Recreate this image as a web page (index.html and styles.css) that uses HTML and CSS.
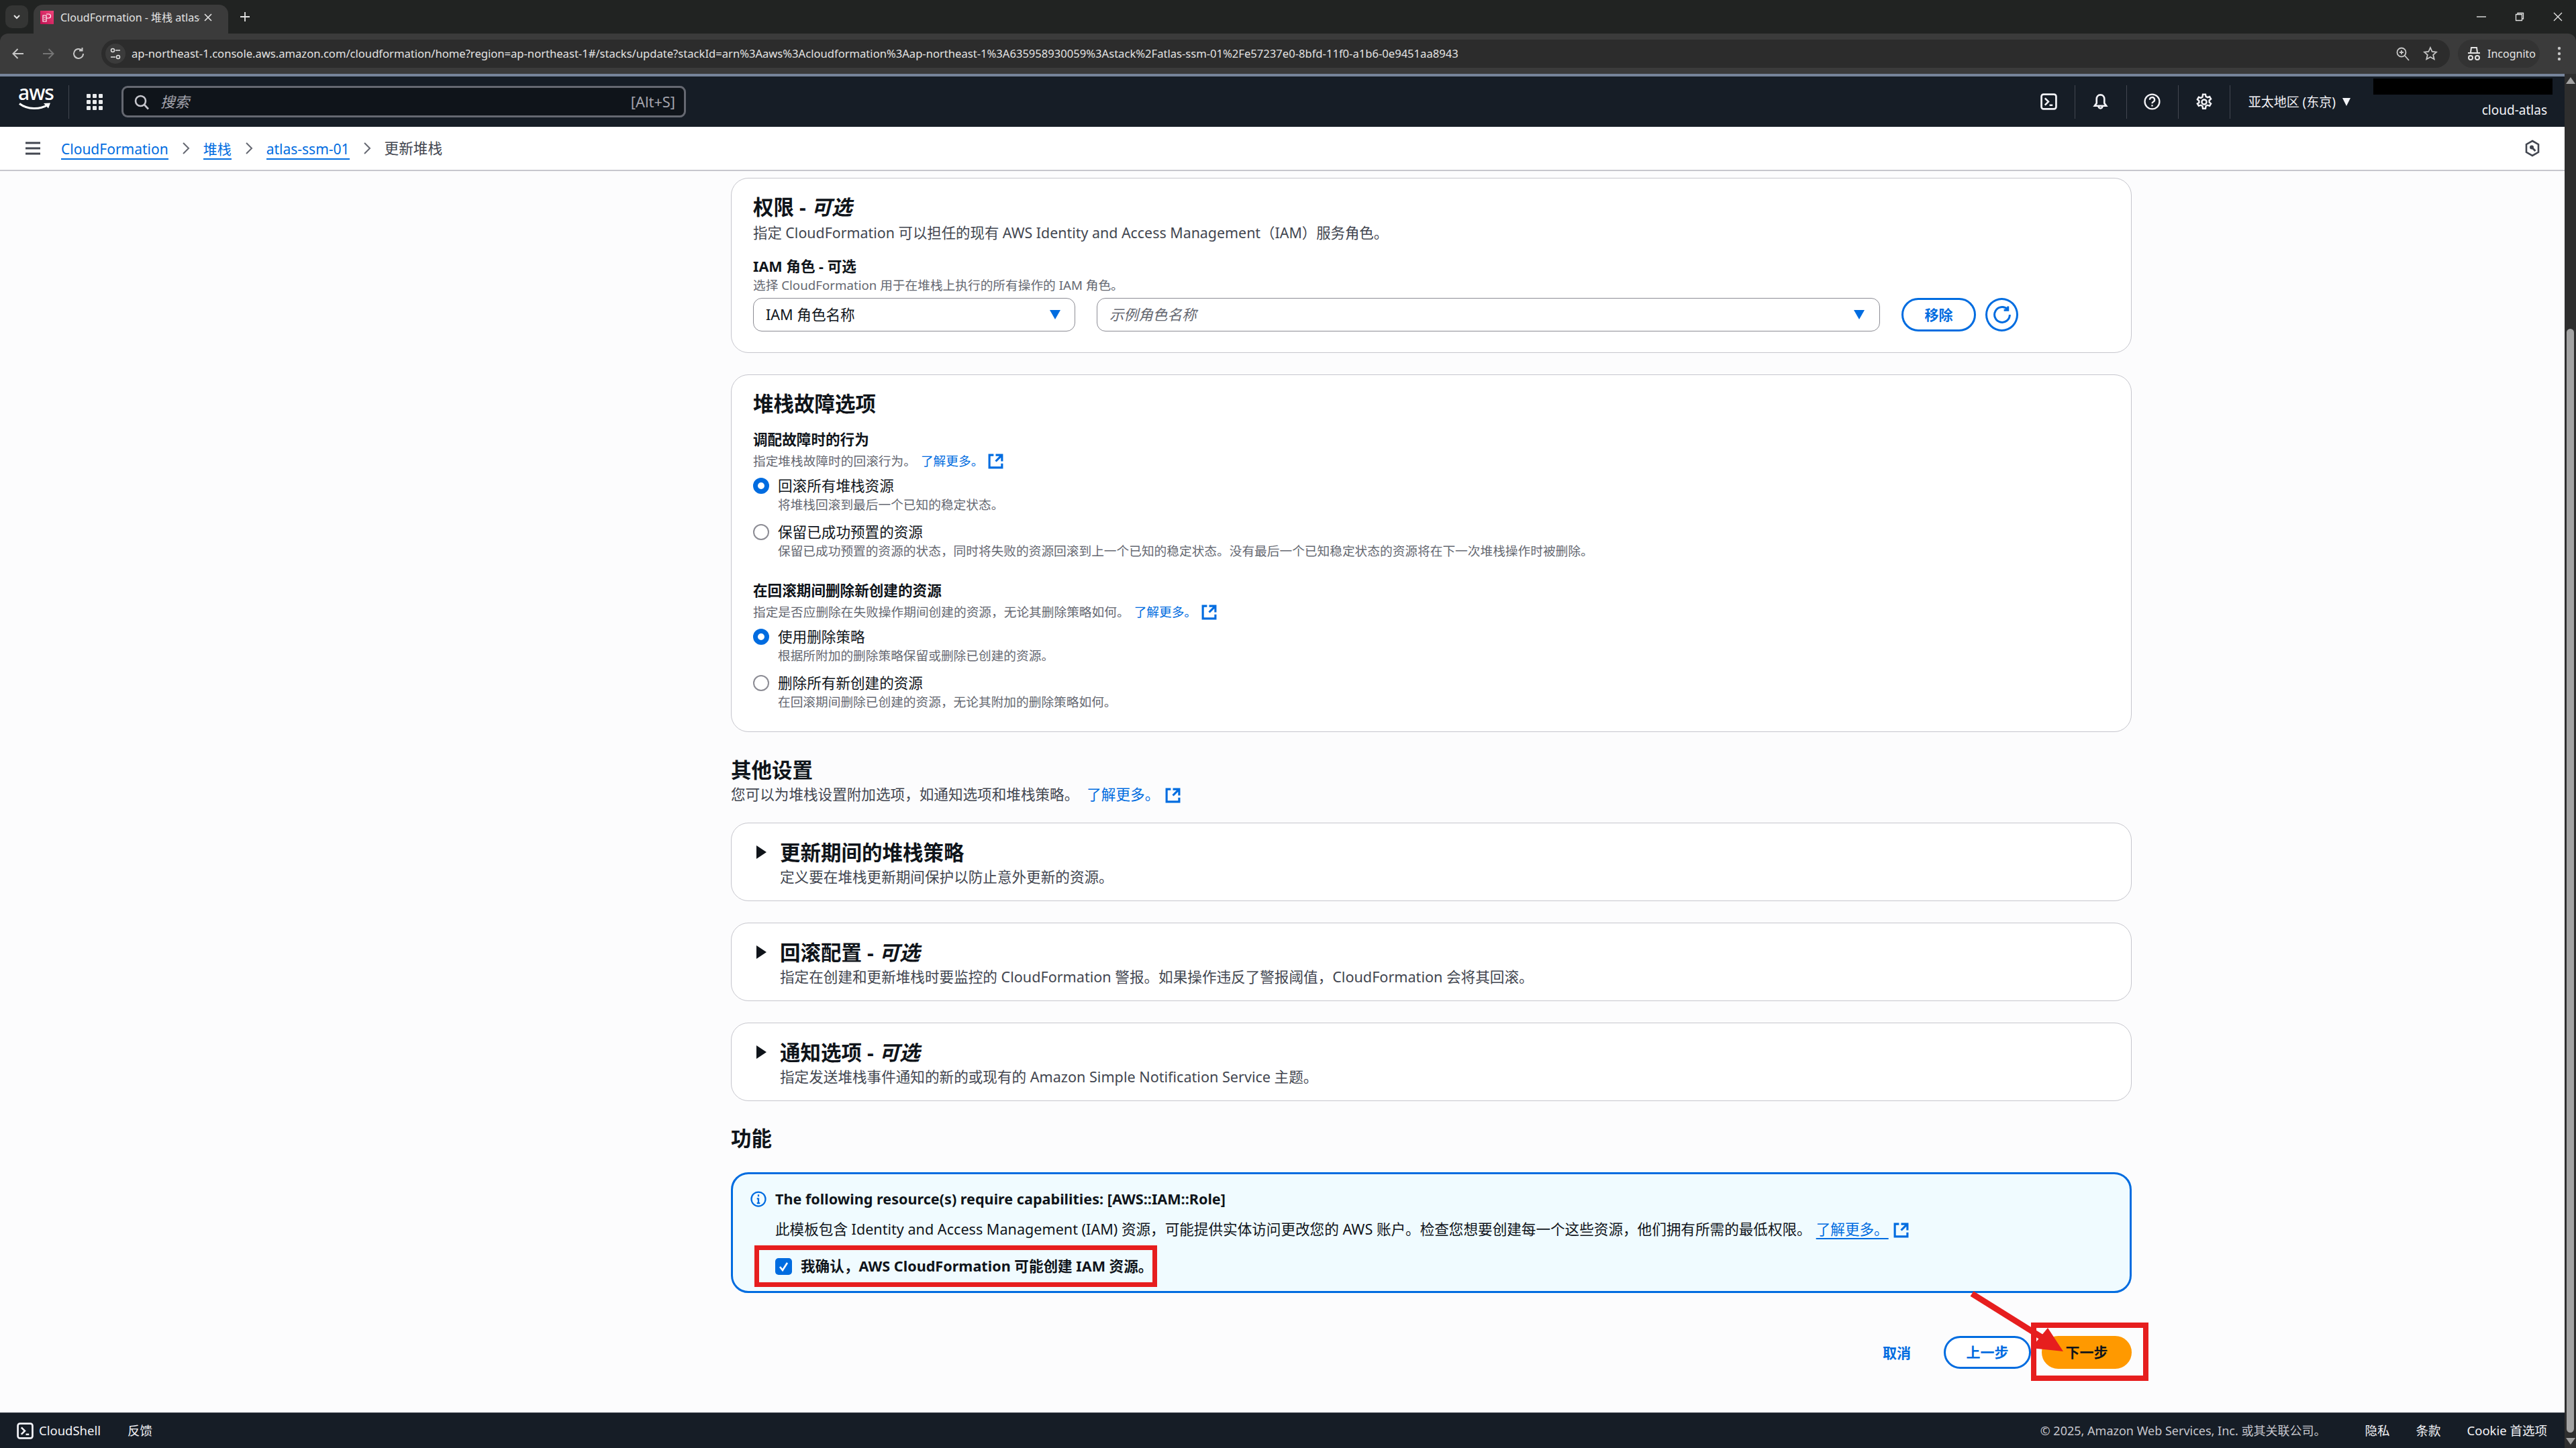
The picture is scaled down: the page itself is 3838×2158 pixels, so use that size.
FILE: index.html
```html
<!DOCTYPE html>
<html lang="zh-CN">
<head>
    <meta charset="UTF-8">
    <title>CloudFormation - 堆栈 atlas-ssm-01</title>
    <link rel="stylesheet" href="styles.css">
</head>
<body>

    <svg class="defs" width="0" height="0">
        <symbol id="ext" viewBox="0 0 16 16">
            <path d="M14 8V2H8M14 2 8 8M6 2H2v12h12v-4" fill="none" stroke="currentColor" stroke-width="2"/>
        </symbol>
        <symbol id="shell" viewBox="0 0 24 24">
            <rect x="1.5" y="1.5" width="21" height="21" rx="3" fill="none" stroke="currentColor" stroke-width="2.6"/>
            <path d="M6.5 7l5 5-5 5M13 17h4.5" fill="none" stroke="currentColor" stroke-width="2.4"/>
        </symbol>
    </svg>

    <div class="tabstrip">
        <div class="tab-list-btn"><svg width="14" height="14" viewBox="0 0 14 14"><path d="M3 5l4 4 4-4" fill="none" stroke="#e3e3e3" stroke-width="2"/></svg></div>
        <div class="tab">
            <span class="favicon"><svg width="16" height="16" viewBox="0 0 16 16"><path d="M2 5h5v9H2zM7 3h3.500a3 3 0 0 1 0 6H7M3.500 8h2M3.500 11h2" fill="none" stroke="#fff" stroke-width="1.200"/></svg></span>
            <span class="tab-title">CloudFormation - 堆栈 atlas-ssm-01</span>
            <svg class="tab-close" width="14" height="14" viewBox="0 0 14 14"><path d="M2 2l10 10M12 2 2 12" stroke="#e3e3e3" stroke-width="1.6"/></svg>
        </div>
        <svg class="new-tab" width="16" height="16" viewBox="0 0 16 16"><path d="M8 1v14M1 8h14" stroke="#e3e3e3" stroke-width="1.8"/></svg>
        <div class="window-btns">
            <svg width="14" height="14" viewBox="0 0 14 14"><path d="M0 7h14" stroke="#e3e3e3" stroke-width="1.4"/></svg>
            <svg width="14" height="14" viewBox="0 0 14 14"><path d="M1.5 3.5h9v9h-9zM4 3.500V1.500h8.500v8.500h-2" fill="none" stroke="#e3e3e3" stroke-width="1.3"/></svg>
            <svg width="14" height="14" viewBox="0 0 14 14"><path d="M1 1l12 12M13 1 1 13" stroke="#e3e3e3" stroke-width="1.3"/></svg>
        </div>
    </div>

    <div class="toolbar">
        <svg class="nav-icon" width="20" height="20" viewBox="0 0 20 20"><path d="M18 10H3M9.500 3 2.500 10l7 7" fill="none" stroke="#c7c7c7" stroke-width="2"/></svg>
        <svg class="nav-icon" width="20" height="20" viewBox="0 0 20 20"><path d="M2 10h15M10.500 3l7 7-7 7" fill="none" stroke="#757575" stroke-width="2"/></svg>
        <svg class="nav-icon" width="20" height="20" viewBox="0 0 20 20"><path d="M17 10a7 7 0 1 1-2.200-5.100M15.500 1v4.500H11" fill="none" stroke="#c7c7c7" stroke-width="2"/></svg>
        <div class="omnibox">
            <span class="site-info"><svg width="16" height="18" viewBox="0 0 16 18"><circle cx="4" cy="4" r="2.500" fill="none" stroke="#e3e3e3" stroke-width="1.500"/><circle cx="12" cy="14" r="2.500" fill="none" stroke="#e3e3e3" stroke-width="1.500"/><path d="M8 4h7M1 14h7" stroke="#e3e3e3" stroke-width="1.500"/></svg></span>
            <span class="url">ap-northeast-1.console.aws.amazon.com/cloudformation/home?region=ap-northeast-1#/stacks/update?stackId=arn%3Aaws%3Acloudformation%3Aap-northeast-1%3A635958930059%3Astack%2Fatlas-ssm-01%2Fe57237e0-8bfd-11f0-a1b6-0e9451aa8943</span>
            <svg class="omni-icon" width="22" height="22" viewBox="0 0 22 22"><circle cx="9" cy="9" r="6.500" fill="none" stroke="#c7c7c7" stroke-width="1.800"/><path d="M14 14l6 7M6 9h6M9 6v6" stroke="#c7c7c7" stroke-width="1.800"/></svg>
            <svg class="omni-icon" width="22" height="22" viewBox="0 0 22 22"><path d="M11 2l2.700 6 6.300.6-4.800 4.200 1.500 6.400L11 16l-5.700 3.200 1.500-6.400L2 8.600 8.300 8z" fill="none" stroke="#c7c7c7" stroke-width="1.800"/></svg>
        </div>
        <div class="incognito">
            <svg width="20" height="22" viewBox="0 0 20 22"><path d="M5 9l1-7h8l1 7M1 10h18" fill="none" stroke="#e3e3e3" stroke-width="2"/><circle cx="5" cy="17" r="3" fill="none" stroke="#e3e3e3" stroke-width="2"/><circle cx="15" cy="17" r="3" fill="none" stroke="#e3e3e3" stroke-width="2"/></svg>
            <span>Incognito</span>
        </div>
        <svg class="menu-dots" width="6" height="22" viewBox="0 0 6 22"><circle cx="3" cy="3" r="2.200" fill="#c7c7c7"/><circle cx="3" cy="11" r="2.200" fill="#c7c7c7"/><circle cx="3" cy="19" r="2.200" fill="#c7c7c7"/></svg>
    </div>

    <div class="viewport">
        <div class="page">
            <header class="topnav">
                <div class="aws-logo">
                    <span class="aws-word">aws</span>
                    <svg width="50" height="12" viewBox="0 0 50 12"><path d="M2 1.500c12 9 30 9 42 2" fill="none" stroke="#fff" stroke-width="3"/><path d="M38 1l10-.5-3 8z" fill="#fff"/></svg>
                </div>
                <svg class="grid-icon" width="26" height="26" viewBox="0 0 26 26"><g fill="#e9ebed"><rect x="1" y="1" width="6" height="6" rx="1"/><rect x="10" y="1" width="6" height="6" rx="1"/><rect x="19" y="1" width="6" height="6" rx="1"/><rect x="1" y="10" width="6" height="6" rx="1"/><rect x="10" y="10" width="6" height="6" rx="1"/><rect x="19" y="10" width="6" height="6" rx="1"/><rect x="1" y="19" width="6" height="6" rx="1"/><rect x="10" y="19" width="6" height="6" rx="1"/><rect x="19" y="19" width="6" height="6" rx="1"/></g></svg>
                <div class="search">
                    <svg width="24" height="24" viewBox="0 0 24 24"><circle cx="10.500" cy="10.500" r="7.500" fill="none" stroke="#c6c6cd" stroke-width="2.600"/><path d="M16 16l6 6.500" stroke="#c6c6cd" stroke-width="2.600"/></svg>
                    <span class="search-text">搜索</span>
                    <span class="search-key">[Alt+S]</span>
                </div>
                <div class="nav-right">
                    <span class="nav-item"><svg width="25" height="25"><use href="#shell"/></svg></span>
                    <span class="nav-item"><svg width="25" height="25" viewBox="0 0 16 16"><path d="M8 1.500C5.800 1.500 4.300 3.300 4.300 5.500v4L2.500 12h11l-1.800-2.500v-4C11.700 3.300 10.200 1.500 8 1.500ZM10 12c0 1.300-.9 2.300-2 2.300S6 13.300 6 12" fill="none" stroke="#f3f3f7" stroke-width="1.700"/></svg></span>
                    <span class="nav-item"><svg width="25" height="25" viewBox="0 0 16 16"><circle cx="8" cy="8" r="7" fill="none" stroke="#f3f3f7" stroke-width="1.500"/><path d="M5.700 6.200a2.300 2.300 0 1 1 3.400 2c-.7.400-1.100.8-1.100 1.600M8 11v1.500" fill="none" stroke="#f3f3f7" stroke-width="1.500"/></svg></span>
                    <span class="nav-item"><svg width="26" height="26" viewBox="0 0 16 16"><circle cx="8" cy="8" r="2.200" fill="none" stroke="#f3f3f7" stroke-width="1.500"/><path d="M6.800 1h2.400l.4 2 1.500.8 1.900-.7 1.200 2.100-1.500 1.300v1.700l1.500 1.300-1.200 2.100-1.900-.7-1.500.8-.4 2.300H6.800l-.4-2.300-1.500-.8-1.900.7-1.200-2.100L3.300 8.700V7L1.800 5.700 3 3.600l1.900.7 1.500-.8z" fill="none" stroke="#f3f3f7" stroke-width="1.500"/></svg></span>
                    <span class="region">亚太地区 (东京)<i class="caret-white"></i></span>
                </div>
                <div class="account">
                    <span class="redacted"></span>
                    <span class="account-name">cloud-atlas</span>
                </div>
            </header>

            <nav class="crumbs">
                <svg class="hamburger" width="24" height="20" viewBox="0 0 24 20"><path d="M1 2h22M1 10h22M1 18h22" stroke="#424650" stroke-width="3"/></svg>
                <a href="#">CloudFormation</a>
                <svg class="chev" width="12" height="20" viewBox="0 0 12 20"><path d="M2 2l8 8-8 8" fill="none" stroke="#656871" stroke-width="2"/></svg>
                <a href="#">堆栈</a>
                <svg class="chev" width="12" height="20" viewBox="0 0 12 20"><path d="M2 2l8 8-8 8" fill="none" stroke="#656871" stroke-width="2"/></svg>
                <a href="#">atlas-ssm-01</a>
                <svg class="chev" width="12" height="20" viewBox="0 0 12 20"><path d="M2 2l8 8-8 8" fill="none" stroke="#656871" stroke-width="2"/></svg>
                <span class="crumb-current">更新堆栈</span>
                <svg class="crumb-right" width="24" height="26" viewBox="0 0 24 26"><path d="M12 2l9 5.200v11.600L12 24l-9-5.200V7.200z" fill="none" stroke="#424650" stroke-width="2.600"/><circle cx="11" cy="11.500" r="3" fill="#424650"/><path d="M11 11.500l5.500 5.500" stroke="#424650" stroke-width="3"/></svg>
            </nav>

            <main class="main">
                <div class="content">

                    <section class="card">
                        <h2>权限 - <em>可选</em></h2>
                        <p class="desc desc-tight">指定 CloudFormation 可以担任的现有 AWS Identity and Access Management（IAM）服务角色。</p>
                        <h3 class="label-first">IAM 角色 - 可选</h3>
                        <p class="small">选择 CloudFormation 用于在堆栈上执行的所有操作的 IAM 角色。</p>
                        <div class="role-row">
                            <div class="select select-type"><span>IAM 角色名称</span><i class="caret"></i></div>
                            <div class="select select-name"><span class="placeholder">示例角色名称</span><i class="caret"></i></div>
                            <button class="btn btn-remove">移除</button>
                            <button class="btn-refresh"><svg width="28" height="28" viewBox="0 0 16 16"><path d="M14.500 8a6.500 6.500 0 1 1-2-4.700M13 .8v3.400H9.500" fill="none" stroke="#006ce0" stroke-width="1.700"/></svg></button>
                        </div>
                    </section>

                    <section class="card card-fail">
                        <h2>堆栈故障选项</h2>
                        <h3 class="label-second">调配故障时的行为</h3>
                        <p class="small with-gap">指定堆栈故障时的回滚行为。<a class="learn" href="#">了解更多。</a><svg class="ext" width="25" height="25"><use href="#ext"/></svg></p>
                        <div class="options">
                            <div class="option"><i class="radio on"></i><div class="option-body"><div>回滚所有堆栈资源</div><p class="small">将堆栈回滚到最后一个已知的稳定状态。</p></div></div>
                            <div class="option"><i class="radio"></i><div class="option-body"><div>保留已成功预置的资源</div><p class="small">保留已成功预置的资源的状态，同时将失败的资源回滚到上一个已知的稳定状态。没有最后一个已知稳定状态的资源将在下一次堆栈操作时被删除。</p></div></div>
                        </div>
                        <h3 class="label-third">在回滚期间删除新创建的资源</h3>
                        <p class="small with-gap">指定是否应删除在失败操作期间创建的资源，无论其删除策略如何。<a class="learn" href="#">了解更多。</a><svg class="ext" width="25" height="25"><use href="#ext"/></svg></p>
                        <div class="options">
                            <div class="option"><i class="radio on"></i><div class="option-body"><div>使用删除策略</div><p class="small">根据所附加的删除策略保留或删除已创建的资源。</p></div></div>
                            <div class="option"><i class="radio"></i><div class="option-body"><div>删除所有新创建的资源</div><p class="small">在回滚期间删除已创建的资源，无论其附加的删除策略如何。</p></div></div>
                        </div>
                    </section>

                    <h2 class="section-title first">其他设置</h2>
                    <p class="desc">您可以为堆栈设置附加选项，如通知选项和堆栈策略。<a class="learn learn-big" href="#">了解更多。</a><svg class="ext ext-big" width="25" height="25"><use href="#ext"/></svg></p>

                    <section class="card expand first">
                        <i class="tri"></i>
                        <div>
                            <h2>更新期间的堆栈策略</h2>
                            <p class="desc">定义要在堆栈更新期间保护以防止意外更新的资源。</p>
                        </div>
                    </section>
                    <section class="card expand">
                        <i class="tri"></i>
                        <div>
                            <h2>回滚配置 - <em>可选</em></h2>
                            <p class="desc">指定在创建和更新堆栈时要监控的 CloudFormation 警报。如果操作违反了警报阈值，CloudFormation 会将其回滚。</p>
                        </div>
                    </section>
                    <section class="card expand">
                        <i class="tri"></i>
                        <div>
                            <h2>通知选项 - <em>可选</em></h2>
                            <p class="desc">指定发送堆栈事件通知的新的或现有的 Amazon Simple Notification Service 主题。</p>
                        </div>
                    </section>

                    <h2 class="section-title caps">功能</h2>
                    <div class="alert">
                        <svg class="alert-icon" width="24" height="24" viewBox="0 0 16 16"><circle cx="8" cy="8" r="7" fill="none" stroke="#006ce0" stroke-width="1.500"/><path d="M8 3.500v2M8 7v5.500M6.500 7.500H8M6.500 12h3" fill="none" stroke="#006ce0" stroke-width="1.500"/></svg>
                        <div class="alert-body">
                            <div class="alert-title">The following resource(s) require capabilities: [AWS::IAM::Role]</div>
                            <div class="alert-text">此模板包含 Identity and Access Management (IAM) 资源，可能提供实体访问更改您的 AWS 账户。检查您想要创建每一个这些资源，他们拥有所需的最低权限。<a class="learn underlined" href="#">了解更多。</a><svg class="ext" width="25" height="25"><use href="#ext"/></svg></div>
                            <div class="ack">
                                <span class="checkbox"><svg width="25" height="25" viewBox="0 0 25 25"><path d="M7 13l4 5 7-11" fill="none" stroke="#fff" stroke-width="2.600"/></svg></span>
                                <span>我确认，AWS CloudFormation 可能创建 IAM 资源。</span>
                                <i class="red-box ack-box"></i>
                            </div>
                        </div>
                    </div>

                    <div class="actions">
                        <a class="cancel" href="#">取消</a>
                        <button class="btn btn-prev">上一步</button>
                        <button class="btn btn-next">下一步<i class="red-box next-box"></i></button>
                        <svg class="arrow" width="150" height="95" viewBox="0 0 150 95"><path d="M8 4l112 70" fill="none" stroke="#e61e1e" stroke-width="9"/><path d="M121 55 96 85 144 90z" fill="#e61e1e"/></svg>
                    </div>
                </div>
            </main>

            <footer class="footer">
                <span class="foot-shell"><svg width="25" height="25"><use href="#shell"/></svg>CloudShell</span>
                <span class="foot-feedback">反馈</span>
                <span class="foot-copy">© 2025, Amazon Web Services, Inc. 或其关联公司。</span>
                <span class="foot-link">隐私</span>
                <span class="foot-link">条款</span>
                <span class="foot-link">Cookie 首选项</span>
            </footer>
        </div>

        <div class="scrollbar">
            <i class="sb-up"></i>
            <i class="sb-thumb"></i>
            <i class="sb-down"></i>
        </div>
    </div>

</body>
</html>
```

FILE: styles.css
```css
* {
    box-sizing: border-box;
}

html, body {
    margin: 0;
    height: 100%;
}

body {
    width: 3838px;
    height: 2158px;
    overflow: hidden;
    display: flex;
    flex-direction: column;
    font-family: "Noto Sans", "Noto Sans CJK SC", sans-serif;
    font-size: 21.6px;
    line-height: 30px;
    color: #0f141a;
    background: #212322;
}

.defs {
    position: absolute;
}

/* browser chrome */
.tabstrip {
    height: 50px;
    flex: none;
    display: flex;
    align-items: flex-end;
    color: #e3e3e3;
}

.tab-list-btn {
    width: 34px;
    height: 34px;
    margin: 0 8px 8px 8px;
    border-radius: 10px;
    background: #343534;
    display: flex;
    align-items: center;
    justify-content: center;
}

.tab {
    width: 290px;
    height: 43px;
    background: #3b3b3b;
    border-radius: 14px 14px 0 0;
    display: flex;
    align-items: center;
    padding: 0 13px 6px 10px;
}

.favicon {
    width: 20px;
    height: 20px;
    flex: none;
    background: linear-gradient(45deg, #bd0f50, #f0447a);
    display: flex;
    align-items: center;
    justify-content: center;
}

.tab-title {
    width: 208px;
    margin-left: 10px;
    font-size: 16px;
    white-space: nowrap;
    overflow: hidden;
}

.tab-close {
    margin-left: 5px;
}

.new-tab {
    margin: 0 0 17px 17px;
}

.window-btns {
    margin-left: auto;
    margin-right: 20px;
    margin-bottom: 18px;
    display: flex;
    gap: 43px;
}

.toolbar {
    height: 60px;
    flex: none;
    display: flex;
    align-items: center;
    background: #3b3b3b;
    border-radius: 12px 12px 0 0;
    padding-left: 17px;
    color: #e3e3e3;
}

.nav-icon {
    margin-right: 25px;
}

.omnibox {
    height: 42px;
    width: 3499px;
    margin-left: -1px;
    border-radius: 21px;
    background: #2c2c2c;
    display: flex;
    align-items: center;
    padding: 0 18px 0 6px;
}

.site-info {
    width: 30px;
    height: 30px;
    flex: none;
    border-radius: 50%;
    background: #3b3b3b;
    display: flex;
    align-items: center;
    justify-content: center;
}

.url {
    margin-left: 9px;
    font-size: 16.600px;
    white-space: nowrap;
    flex: 1;
    overflow: hidden;
}

.omni-icon {
    margin-left: 19px;
}

.incognito {
    width: 122px;
    height: 42px;
    margin-left: 12px;
    border-radius: 21px;
    background: #333;
    display: flex;
    align-items: center;
    gap: 10px;
    padding-left: 14px;
    font-size: 16px;
}

.menu-dots {
    margin-left: 26px;
}

/* page + scrollbar */
.viewport {
    flex: 1;
    display: flex;
    min-height: 0;
}

.page {
    flex: 1;
    min-width: 0;
    display: flex;
    flex-direction: column;
}

.scrollbar {
    width: 17px;
    flex: none;
    background: #2e2e2e;
    display: flex;
    flex-direction: column;
    align-items: center;
}

.sb-up, .sb-down {
    width: 0;
    height: 0;
    border-left: 7px solid transparent;
    border-right: 7px solid transparent;
}

.sb-up {
    margin-top: 5px;
    border-bottom: 10px solid #a3a3a3;
}

.sb-thumb {
    width: 11px;
    height: 1645px;
    margin-top: auto;
    background: #a3a3a3;
    border-radius: 6px;
}

.sb-down {
    margin: 8px 0 5px;
    border-top: 10px solid #a3a3a3;
}

/* aws top nav */
.topnav {
    height: 79px;
    flex: none;
    display: flex;
    align-items: center;
    background: #161d26;
    border-top: 4px solid #76849a;
    color: #f3f3f7;
    position: relative;
}

.aws-logo {
    width: 103px;
    height: 50px;
    flex: none;
    padding-left: 27px;
    border-right: 1px solid #424650;
    line-height: 22px;
}

.aws-word {
    display: block;
    font-size: 30px;
    font-weight: 500;
    letter-spacing: -1px;
    height: 26px;
    color: #fff;
}

.aws-logo svg {
    display: block;
}

.grid-icon {
    margin-left: 25px;
    flex: none;
}

.search {
    width: 841px;
    height: 47px;
    margin-left: 27px;
    flex: none;
    border: 3px solid #656871;
    border-radius: 9px;
    background: #0f141a;
    display: flex;
    align-items: center;
    padding: 0 13px 0 15px;
    color: #a4a4ad;
}

.search-text {
    margin-left: 16px;
    font-style: italic;
}

.search-key {
    margin-left: auto;
    font-size: 21.8px;
}

.nav-right {
    display: flex;
    align-items: center;
    margin-left: auto;
    margin-right: 319px;
}

.nav-item {
    width: 77px;
    height: 50px;
    border-right: 1px solid #424650;
    display: flex;
    align-items: center;
    justify-content: center;
    color: #f3f3f7;
}

.region {
    margin-left: 27px;
    font-size: 19px;
    display: flex;
    align-items: center;
    gap: 10px;
    white-space: nowrap;
}

.caret-white {
    border-left: 6px solid transparent;
    border-right: 6px solid transparent;
    border-top: 12px solid #f3f3f7;
    width: 0;
}

.account {
    position: absolute;
    right: 18px;
    top: 0;
    text-align: right;
}

.redacted {
    display: block;
    width: 267px;
    height: 24px;
    margin: 3px 0 0 auto;
    background: #000;
}

.account-name {
    display: block;
    margin-top: 8px;
    font-size: 19px;
    line-height: 30px;
    margin-right: 8px;
}

/* breadcrumbs */
.crumbs {
    height: 66px;
    flex: none;
    display: flex;
    align-items: center;
    padding: 0 37px;
    background: #fff;
    border-bottom: 2px solid #c6c6cd;
    font-size: 21px;
}

.crumbs a {
    color: #006ce0;
    text-decoration: none;
    border-bottom: 2px solid #006ce0;
    line-height: 27px;
    margin-top: 4px;
}

.hamburger {
    margin-right: 30px;
}

.chev {
    margin: 0 20px;
    flex: none;
}

.crumb-current {
    color: #424650;
    font-size: 21.6px;
}

.crumb-right {
    margin-left: auto;
    margin-right: -1px;
}

/* main column */
.main {
    flex: 1;
    min-height: 0;
    overflow: hidden;
    padding-top: 10px;
    background: #fcfcfd;
}

.content {
    width: 2087px;
    margin-left: 1089px;
}

h2 {
    margin: 0;
    font-size: 30.500px;
    line-height: 44px;
    font-weight: 700;
}

h3 {
    margin: 0;
    font-size: 21.600px;
    line-height: 30px;
    font-weight: 700;
}

p {
    margin: 0;
}

.desc {
    line-height: 30px;
    color: #424650;
}

.desc-tight {
    font-size: 21.400px;
}

.small {
    font-size: 18.700px;
    line-height: 26px;
    color: #656871;
}

.card {
    background: #fff;
    border: 1px solid #c6c6cd;
    border-radius: 26px;
    padding: 20px 32px 31px;
    margin-bottom: 32px;
}

.card > .desc {
    margin-top: 2px;
}

.label-first {
    margin-top: 20px;
}

.label-second {
    margin-top: 17px;
}

.label-third {
    margin-top: 31px;
}

.with-gap {
    margin-top: 4px;
}

.learn {
    color: #006ce0;
    text-decoration: none;
    margin-left: 7px;
}

.learn-big {
    margin-left: 12px;
}

.underlined {
    text-decoration: underline;
    text-underline-offset: 5px;
}

.ext {
    color: #006ce0;
    margin-left: 6px;
    vertical-align: -6px;
}

.ext-big {
    margin-left: 8px;
}

.role-row {
    display: flex;
    margin-top: 6px;
    height: 50px;
}

.select {
    height: 50px;
    border: 1px solid #8c8c94;
    border-radius: 13px;
    background: #fff;
    display: flex;
    align-items: center;
    justify-content: space-between;
    padding: 0 21px 0 18px;
    color: #0f141a;
}

.select-type {
    width: 480px;
}

.select-name {
    width: 1167px;
    margin-left: 32px;
    padding-right: 22px;
}

.placeholder {
    color: #656871;
    font-style: italic;
}

.caret {
    width: 0;
    height: 0;
    border-left: 8px solid transparent;
    border-right: 8px solid transparent;
    border-top: 14px solid #006ce0;
}

button {
    font-family: inherit;
    cursor: pointer;
}

.btn {
    height: 49px;
    border-radius: 25px;
    font-size: 21px;
    font-weight: 700;
    padding: 0;
    background: #fff;
    border: 3px solid #006ce0;
    color: #006ce0;
    line-height: 1;
    position: relative;
}

.btn-remove {
    width: 111px;
    height: 50px;
    margin-left: 32px;
}

.btn-refresh {
    width: 49px;
    height: 50px;
    margin-left: 14px;
    padding: 0;
    background: #fff;
    border: 3px solid #006ce0;
    border-radius: 50%;
    display: flex;
    align-items: center;
    justify-content: center;
}

.options {
    display: flex;
    flex-direction: column;
    gap: 13px;
    margin-top: 9px;
}

.option {
    display: flex;
    gap: 13px;
}

.radio {
    width: 24px;
    height: 24px;
    flex: none;
    margin-top: 3px;
    border-radius: 50%;
    border: 2px solid #8c8c94;
    background: #fff;
}

.radio.on {
    border: 7.500px solid #006ce0;
}

.section-title {
    margin-top: 33px;
}

.section-title.first {
    margin-top: 34px;
}

.card.first {
    margin-top: 27px;
}

.expand {
    display: flex;
    gap: 20px;
    padding: 21px 32px 20px 37px;
}

.expand .desc {
    color: #424650;
}

.expand h2 + .desc {
    margin-top: 0;
}

.tri {
    width: 0;
    height: 0;
    flex: none;
    margin-top: 12px;
    border-top: 10px solid transparent;
    border-bottom: 10px solid transparent;
    border-left: 15px solid #0f141a;
}

.alert {
    height: 180px;
    margin-top: 29px;
    border: 3px solid #006ce0;
    border-radius: 26px;
    background: #f0fbff;
    padding: 22px 26px;
    display: flex;
    gap: 13px;
}

.alert-icon {
    flex: none;
    margin-top: 3px;
}

.alert-title {
    font-weight: 700;
    color: #0f141a;
}

.alert-text {
    margin-top: 15px;
}

.ack {
    margin-top: 25px;
    display: flex;
    align-items: center;
    gap: 13px;
    font-weight: 700;
    position: relative;
    width: fit-content;
}

.checkbox {
    width: 25px;
    height: 25px;
    flex: none;
    background: #006ce0;
    border-radius: 5px;
}

.checkbox svg {
    display: block;
}

.red-box {
    position: absolute;
    border: 7px solid #e61e1e;
    display: block;
}

.ack-box {
    left: -31px;
    top: -16px;
    width: 600px;
    height: 62px;
}

.actions {
    display: flex;
    justify-content: flex-end;
    align-items: center;
    margin-top: 64px;
    position: relative;
}

.cancel {
    color: #006ce0;
    text-decoration: none;
    font-weight: 700;
    font-size: 21px;
    margin-right: 49px;
}

.btn-prev {
    width: 130px;
}

.btn-next {
    width: 134px;
    margin-left: 16px;
    background: #ff9900;
    border-color: #ff9900;
    color: #0f141a;
}

.next-box {
    left: -19px;
    top: -23px;
    width: 175px;
    height: 87px;
    border-width: 8px;
}

.arrow {
    position: absolute;
    right: 96px;
    top: -67px;
}

/* footer */
.footer {
    height: 53px;
    flex: none;
    display: flex;
    align-items: center;
    background: #161d26;
    border-top: 1px solid #424650;
    color: #f3f3f7;
    font-size: 18.500px;
    padding: 0 26px 0 25px;
}

.foot-shell {
    display: flex;
    align-items: center;
    gap: 8px;
}

.foot-feedback {
    margin-left: 40px;
}

.foot-copy {
    margin-left: auto;
    color: #c6c6cd;
    margin-right: 58px;
    font-size: 18px;
}

.foot-link {
    margin-left: 39px;
}

.foot-copy + .foot-link {
    margin-left: 0;
}
```
